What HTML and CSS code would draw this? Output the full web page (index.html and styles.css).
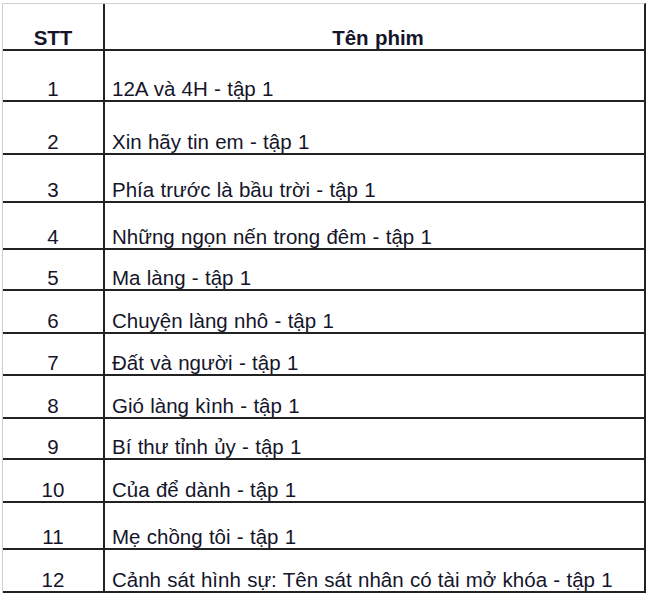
FILE: index.html
```html
<!DOCTYPE html>
<html lang="vi">
<head>
<meta charset="utf-8">
<title>Danh sách phim</title>
<link rel="stylesheet" href="styles.css">
</head>
<body>
<div class="sheet">
  <div class="row head"><div class="cell num">STT</div><div class="cell name">Tên phim</div></div>
  <div class="row r1"><div class="cell num">1</div><div class="cell name">12A và 4H - tập 1</div></div>
  <div class="row r2"><div class="cell num">2</div><div class="cell name">Xin hãy tin em - tập 1</div></div>
  <div class="row r3"><div class="cell num">3</div><div class="cell name">Phía trước là bầu trời - tập 1</div></div>
  <div class="row r4"><div class="cell num">4</div><div class="cell name">Những ngọn nến trong đêm - tập 1</div></div>
  <div class="row r5"><div class="cell num">5</div><div class="cell name">Ma làng - tập 1</div></div>
  <div class="row r6"><div class="cell num">6</div><div class="cell name">Chuyện làng nhô - tập 1</div></div>
  <div class="row r7"><div class="cell num">7</div><div class="cell name">Đất và người - tập 1</div></div>
  <div class="row r8"><div class="cell num">8</div><div class="cell name">Gió làng kình - tập 1</div></div>
  <div class="row r9"><div class="cell num">9</div><div class="cell name">Bí thư tỉnh ủy - tập 1</div></div>
  <div class="row r10"><div class="cell num">10</div><div class="cell name">Của để dành - tập 1</div></div>
  <div class="row r11"><div class="cell num">11</div><div class="cell name">Mẹ chồng tôi - tập 1</div></div>
  <div class="row r12"><div class="cell num">12</div><div class="cell name">Cảnh sát hình sự: Tên sát nhân có tài mở khóa - tập 1</div></div>
</div>
</body>
</html>
```
FILE: styles.css
```css
html, body {
  margin: 0;
  padding: 0;
  background: #ffffff;
}
body {
  font-family: "Liberation Sans", Arial, sans-serif;
  font-size: 20.5px;
  color: #15152a;
}
.sheet {
  box-sizing: border-box;
  width: 644px;
  margin: 3px 0 0 2px;
  border-top: 1px solid #cfcfcf;
  border-left: 1px solid #cfcfcf;
  border-right: 2px solid #222222;
}
.row {
  box-sizing: border-box;
  display: grid;
  grid-template-columns: 102px 1fr;
  border-bottom: 2px solid #222222;
}
.cell {
  display: flex;
  align-items: flex-end;
  padding-bottom: 0;
  line-height: 22px;
  box-sizing: border-box;
}
.num {
  justify-content: center;
  border-right: 2px solid #222222;
}
.name {
  padding-left: 7px;
  word-spacing: 0.6px;
}
.head .cell {
  font-weight: bold;
}
.head .name {
  justify-content: center;
}
.head { height: 47px; }
.r1 { height: 51px; }
.r2 { height: 53px; }
.r3 { height: 48px; }
.r4 { height: 47px; }
.r5 { height: 41px; }
.r6 { height: 43px; }
.r7 { height: 42px; }
.r8 { height: 43px; }
.r9 { height: 41px; }
.r10 { height: 43px; }
.r11 { height: 47px; }
.r12 { height: 43px; }
```
